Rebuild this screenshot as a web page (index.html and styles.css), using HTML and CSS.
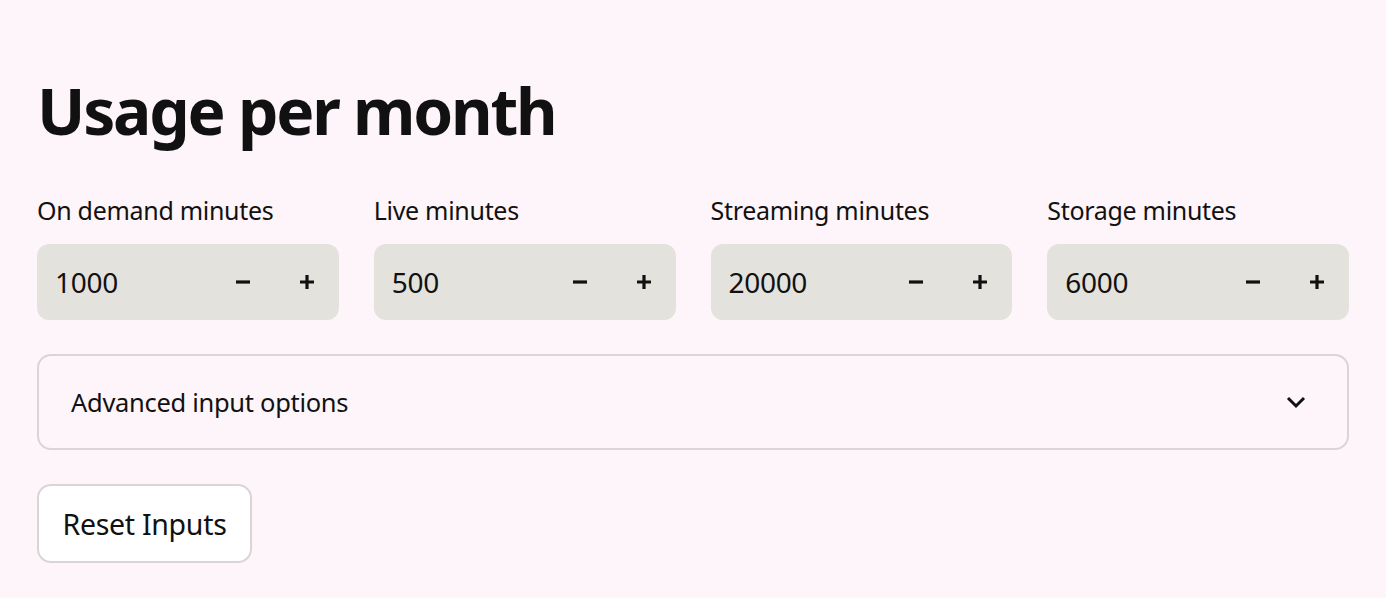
FILE: index.html
```html
<!DOCTYPE html>
<html lang="en">
<head>
    <meta charset="UTF-8">
    <title>Usage per month</title>
    <link rel="stylesheet" href="styles.css">
</head>
<body>
    <div class="page">
        <h1 class="title">Usage per month</h1>

        <div class="inputs">
            <div class="field">
                <label>On demand minutes</label>
                <div class="number-input">
                    <span class="value">1000</span>
                    <button class="step"><svg width="16" height="16" viewBox="0 0 16 16"><path d="M1 8h14" stroke="#111" stroke-width="3.2"/></svg></button>
                    <button class="step"><svg width="16" height="16" viewBox="0 0 16 16"><path d="M1 8h14M8 1v14" stroke="#111" stroke-width="3.2"/></svg></button>
                </div>
            </div>
            <div class="field">
                <label>Live minutes</label>
                <div class="number-input">
                    <span class="value">500</span>
                    <button class="step"><svg width="16" height="16" viewBox="0 0 16 16"><path d="M1 8h14" stroke="#111" stroke-width="3.2"/></svg></button>
                    <button class="step"><svg width="16" height="16" viewBox="0 0 16 16"><path d="M1 8h14M8 1v14" stroke="#111" stroke-width="3.2"/></svg></button>
                </div>
            </div>
            <div class="field">
                <label>Streaming minutes</label>
                <div class="number-input">
                    <span class="value">20000</span>
                    <button class="step"><svg width="16" height="16" viewBox="0 0 16 16"><path d="M1 8h14" stroke="#111" stroke-width="3.2"/></svg></button>
                    <button class="step"><svg width="16" height="16" viewBox="0 0 16 16"><path d="M1 8h14M8 1v14" stroke="#111" stroke-width="3.2"/></svg></button>
                </div>
            </div>
            <div class="field">
                <label>Storage minutes</label>
                <div class="number-input">
                    <span class="value">6000</span>
                    <button class="step"><svg width="16" height="16" viewBox="0 0 16 16"><path d="M1 8h14" stroke="#111" stroke-width="3.2"/></svg></button>
                    <button class="step"><svg width="16" height="16" viewBox="0 0 16 16"><path d="M1 8h14M8 1v14" stroke="#111" stroke-width="3.2"/></svg></button>
                </div>
            </div>
        </div>

        <div class="expander">
            <span>Advanced input options</span>
            <svg width="22" height="14" viewBox="0 0 22 14"><path d="M3 3l8 8 8-8" fill="none" stroke="#111" stroke-width="3"/></svg>
        </div>

        <button class="reset">Reset Inputs</button>
    </div>
</body>
</html>
```

FILE: styles.css
```css
body {
    margin: 0;
    background-color: #fef5fa;
    font-family: "Noto Sans", sans-serif;
    color: #111;
}
.page {
    padding: 66px 37px 0 37px;
}
.title {
    margin: 0;
    font-size: 64px;
    font-weight: 700;
    line-height: 90px;
    letter-spacing: -2.2px;
}
.inputs {
    display: grid;
    grid-template-columns: repeat(4, 1fr);
    gap: 35px;
    margin-top: 38px;
}
.field label {
    display: block;
    font-size: 25px;
    line-height: 32px;
    margin-bottom: 18px;
    letter-spacing: -0.3px;
}
.number-input {
    display: flex;
    align-items: center;
    height: 76px;
    border-radius: 12px;
    background-color: #e3e2dd;
}
.value {
    flex: 1;
    padding-left: 18px;
    font-size: 28px;
    letter-spacing: -0.3px;
}
.step {
    width: 64px;
    height: 100%;
    border: none;
    background: none;
    display: flex;
    align-items: center;
    justify-content: center;
    padding: 0;
}
.expander {
    display: flex;
    align-items: center;
    justify-content: space-between;
    height: 92px;
    margin-top: 34px;
    padding: 0 40px 0 32px;
    border: 2px solid #dad4d7;
    border-radius: 14px;
    font-size: 25.5px;
    letter-spacing: -0.3px;
}
.reset {
    display: block;
    box-sizing: border-box;
    margin-top: 34px;
    width: 215px;
    height: 79px;
    background-color: #fff;
    border: 2px solid #dad4d7;
    border-radius: 14px;
    font-family: "Noto Sans", sans-serif;
    font-size: 28.5px;
    color: #111;
    letter-spacing: -0.3px;
}
```
